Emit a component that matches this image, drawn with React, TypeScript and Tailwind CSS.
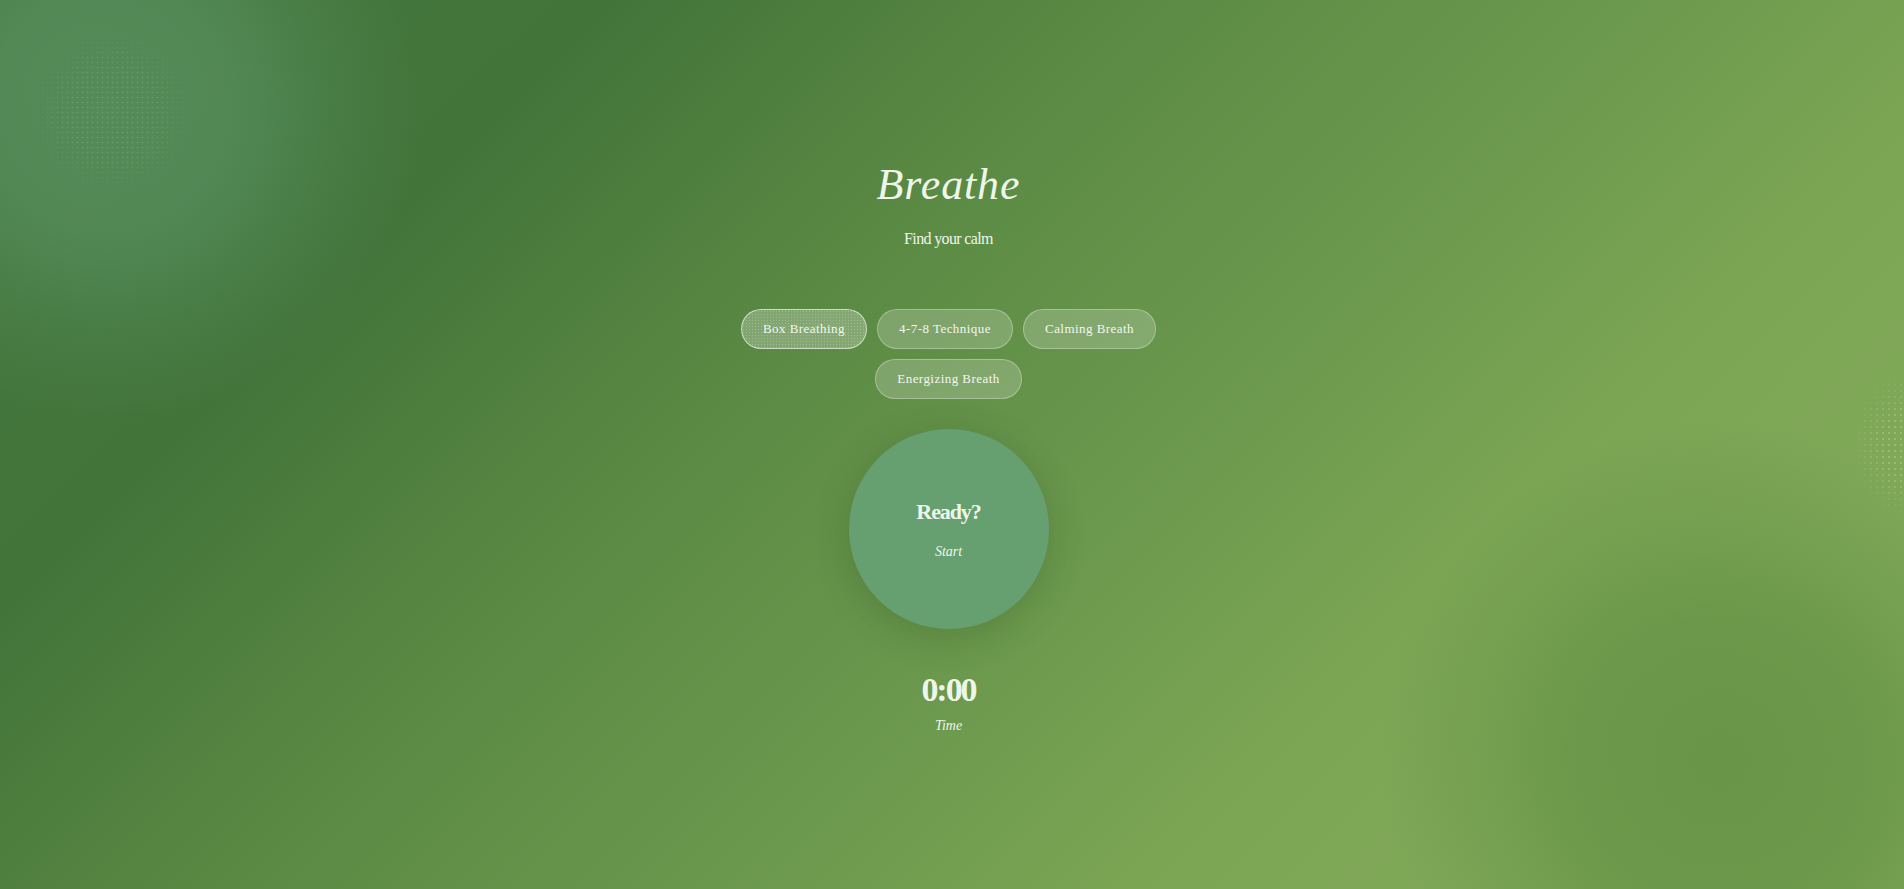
import React from "react";

const serif = "font-['Liberation_Serif','DejaVu_Serif',serif]";

export default function App() {
  const techniques = ["Box Breathing", "4-7-8 Technique", "Calming Breath", "Energizing Breath"];
  return (
    <div className={`relative min-h-screen w-full overflow-hidden bg-[linear-gradient(135deg,#44773d_0%,#42743a_22%,#568541_36%,#5f8e47_45%,#6d9a4e_60%,#7ba553_72%,#80a858_85%,#80a858_100%)] text-[#eef5e9] ${serif}`}>
      <div className="pointer-events-none absolute left-[-200px] top-[-200px] h-[620px] w-[620px] rounded-full bg-[radial-gradient(circle_closest-side,rgba(108,168,128,0.42)_0%,rgba(108,168,128,0.36)_40%,rgba(108,168,128,0.14)_72%,rgba(108,168,128,0)_100%)]" />
      <div className="pointer-events-none absolute left-[30px] top-[30px] h-[165px] w-[165px] rounded-full bg-[radial-gradient(rgba(190,235,190,0.2)_0.7px,transparent_1.1px)] bg-[length:5px_5px] [mask-image:radial-gradient(circle_closest-side,black_55%,transparent_100%)]" />
      <div className="pointer-events-none absolute left-[1380px] top-[420px] h-[680px] w-[680px] rounded-full bg-[radial-gradient(circle_closest-side,rgba(80,130,55,0.5)_0%,rgba(80,130,55,0.42)_42%,rgba(80,130,55,0.15)_76%,rgba(80,130,55,0)_100%)]" />
      <div className="pointer-events-none absolute left-[1850px] top-[370px] h-[150px] w-[110px] rounded-full bg-[radial-gradient(rgba(200,240,170,0.3)_0.7px,transparent_1.1px)] bg-[length:6px_6px] [mask-image:radial-gradient(closest-side,black_40%,transparent_100%)]" />

      <div className="relative flex flex-col items-center pr-[7px] pt-[159px]">
        <h1 className="text-[44px] leading-[52px] italic font-normal tracking-[0.02em]">Breathe</h1>
        <p className="mt-4 text-[16px] leading-6 tracking-[-0.04em]">Find your calm</p>

        <div className="mt-[58px] flex max-w-[480px] flex-wrap justify-center gap-[10px]">
          {techniques.map((t, i) => (
            <button
              key={t}
              className={
                i === 0
                  ? "rounded-full border border-white/60 bg-white/25 bg-[radial-gradient(rgba(255,255,255,0.22)_0.6px,transparent_0.9px)] bg-[length:3px_3px] px-[21px] py-[9px] text-[13px] leading-5 tracking-[0.035em] text-[#f2f7ee]"
                  : "rounded-full border border-white/30 bg-white/20 px-[21px] py-[9px] text-[13px] leading-5 tracking-[0.035em] text-[#f2f7ee]"
              }
            >
              {t}
            </button>
          ))}
        </div>

        <div className="mt-[30px] flex h-[200px] w-[200px] flex-col items-center justify-center rounded-full bg-[#66a070] pt-[2px] shadow-[0_8px_36px_rgba(30,60,20,0.22)]">
          <div className="text-[22px] leading-7 font-bold tracking-[-0.05em]">Ready?</div>
          <div className="mt-4 text-[14px] leading-5 italic">Start</div>
        </div>

        <div className="mt-[41px] text-[34px] leading-10 font-bold tracking-[-0.06em]">0:00</div>
        <div className="mt-[6px] text-[14px] leading-5 italic">Time</div>
      </div>
    </div>
  );
}
